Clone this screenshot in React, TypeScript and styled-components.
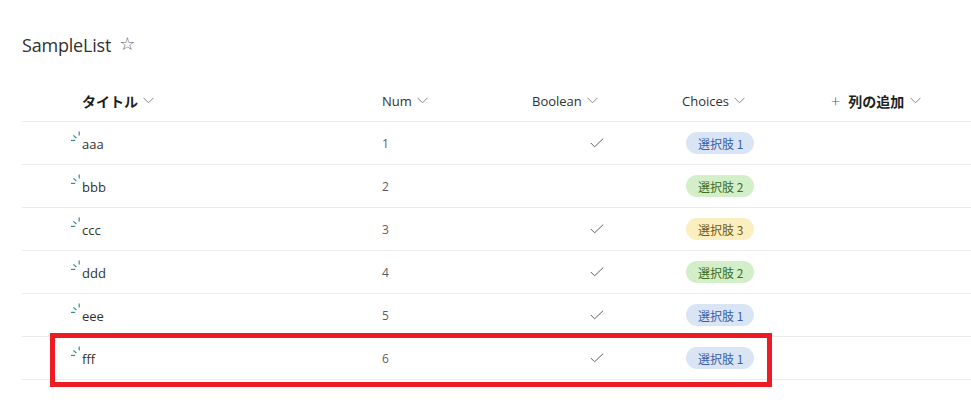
import React from "react";
import styled, { createGlobalStyle } from "styled-components";

const Global = createGlobalStyle`
  html, body { margin: 0; padding: 0; background: #fff; }
  body { font-family: "Open Sans", "Noto Sans", "Noto Sans CJK JP", sans-serif; color: #323130; }
`;

const Page = styled.div`
  width: 971px;
  min-height: 412px;
  padding: 30px 0 0 22px;
  box-sizing: border-box;
`;

const TitleBar = styled.div`
  display: flex;
  align-items: center;
  gap: 8px;
  height: 30px;
`;

const ListName = styled.h1`
  margin: 0;
  font-size: 18px;
  font-weight: 400;
  color: #323130;
  letter-spacing: -0.2px;
`;

const Star = styled.span`
  font-size: 18px;
  line-height: 1;
  color: #605e5c;
  font-family: "DejaVu Sans", sans-serif;
  margin-top: -2px;
`;

const Table = styled.div`
  margin-top: 20px;
  display: flex;
  flex-direction: column;
`;

const Row = styled.div<{ $header?: boolean }>`
  position: relative;
  display: grid;
  grid-template-columns: 60px 300px 150px 150px 149px 1fr;
  align-items: center;
  height: ${(p) => (p.$header ? 41 : 42)}px;
  border-bottom: 1px solid #edebe9;
`;

const HeadCell = styled.div<{ $strong?: boolean }>`
  display: flex;
  align-items: center;
  gap: 5px;
  font-size: ${(p) => (p.$strong ? 14 : 13)}px;
  font-weight: ${(p) => (p.$strong ? 600 : 400)};
  color: ${(p) => (p.$strong ? "#201f1e" : "#323130")};
  font-family: "Open Sans", "Noto Sans CJK JP", sans-serif;
`;

const AddCol = styled(HeadCell)`
  gap: 6px;
`;

const Plus = styled.span`
  font-size: 16px;
  font-weight: 300;
  color: #605e5c;
  margin-right: 2px;
`;

const IconCell = styled.div`
  display: flex;
  justify-content: flex-end;
  padding-right: 1px;
  margin-top: -14px;
`;

const TitleText = styled.div`
  font-size: 13px;
  color: #323130;
  padding-top: 2px;
`;

const NumText = styled.div`
  font-size: 12px;
  color: #605e5c;
`;

const CheckCell = styled.div`
  padding-left: 58px;
  display: flex;
`;

const Pill = styled.span<{ $bg: string; $fg: string }>`
  display: inline-flex;
  align-items: center;
  height: 22px;
  padding: 0 11px 0 12px;
  margin-left: 4px;
  border-radius: 11px;
  background: ${(p) => p.$bg};
  color: ${(p) => p.$fg};
  font-size: 12px;
  font-family: "Noto Sans CJK JP", sans-serif;
  width: fit-content;
`;

const Highlight = styled.div`
  position: absolute;
  box-sizing: border-box;
  left: 28px;
  top: -4px;
  width: 722px;
  height: 54px;
  border: 5px solid #ed1c24;
  pointer-events: none;
  z-index: 2;
`;

const Chevron = () => (
  <svg width="11" height="7" viewBox="0 0 11 7">
    <path d="M0.5 0.8 L5.5 5.8 L10.5 0.8" fill="none" stroke="#8a8886" strokeWidth="1" />
  </svg>
);

const NewIcon = () => (
  <svg width="10" height="10" viewBox="0 0 10 10">
    <path d="M0 9.4 H4.2" stroke="#3f8a91" strokeWidth="1.2" />
    <path d="M2.4 4.4 L5.4 7" stroke="#3f8a91" strokeWidth="1.2" />
    <path d="M8.2 0.4 V4.4" stroke="#3f8a91" strokeWidth="1.2" />
  </svg>
);

const Check = () => (
  <svg width="14" height="10" viewBox="0 0 14 10">
    <path d="M0.8 5 L4.6 8.8 L13.2 0.6" fill="none" stroke="#605e5c" strokeWidth="1" />
  </svg>
);

const pillColors: Record<string, { bg: string; fg: string }> = {
  "選択肢 1": { bg: "#d9e5f5", fg: "#3a5ea6" },
  "選択肢 2": { bg: "#d3efc9", fg: "#3d6b1f" },
  "選択肢 3": { bg: "#fbeebf", fg: "#6f5a14" },
};

const rows = [
  { t: "aaa", n: 1, b: true, c: "選択肢 1" },
  { t: "bbb", n: 2, b: false, c: "選択肢 2" },
  { t: "ccc", n: 3, b: true, c: "選択肢 3" },
  { t: "ddd", n: 4, b: true, c: "選択肢 2" },
  { t: "eee", n: 5, b: true, c: "選択肢 1" },
  { t: "fff", n: 6, b: true, c: "選択肢 1" },
];

export default function App() {
  return (
    <Page>
      <Global />
      <TitleBar>
        <ListName>SampleList</ListName>
        <Star>☆</Star>
      </TitleBar>
      <Table>
        <Row $header>
          <div />
          <HeadCell $strong>
            タイトル <Chevron />
          </HeadCell>
          <HeadCell>
            Num <Chevron />
          </HeadCell>
          <HeadCell>
            Boolean <Chevron />
          </HeadCell>
          <HeadCell>
            Choices <Chevron />
          </HeadCell>
          <AddCol $strong>
            <Plus>+</Plus>列の追加 <Chevron />
          </AddCol>
        </Row>
        {rows.map((r, i) => (
          <Row key={r.t}>
            <IconCell>
              <NewIcon />
            </IconCell>
            <TitleText>{r.t}</TitleText>
            <NumText>{r.n}</NumText>
            <CheckCell>{r.b ? <Check /> : null}</CheckCell>
            <div>
              <Pill $bg={pillColors[r.c].bg} $fg={pillColors[r.c].fg}>
                {r.c}
              </Pill>
            </div>
            <div />
            {i === rows.length - 1 && <Highlight />}
          </Row>
        ))}
      </Table>
    </Page>
  );
}
